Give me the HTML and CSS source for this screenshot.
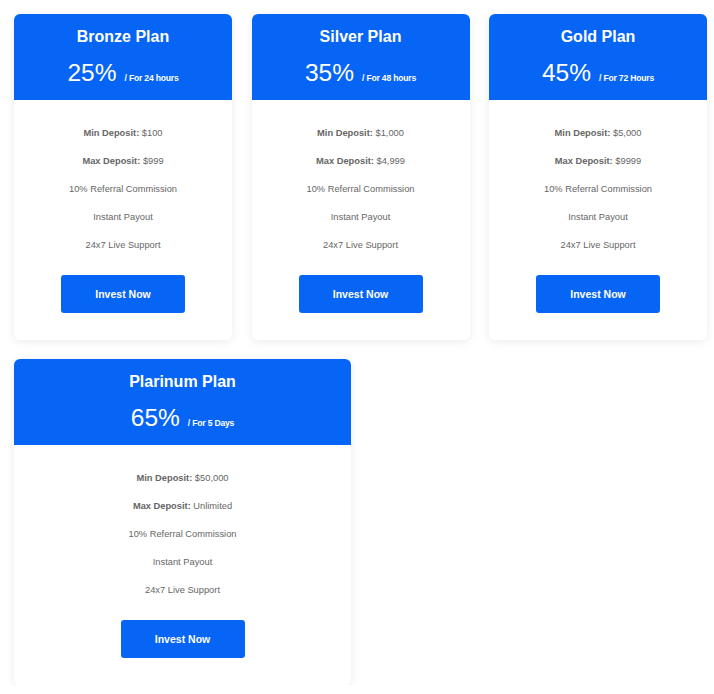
FILE: index.html
```html
<!DOCTYPE html>
<html>
<head>
<meta charset="utf-8">
<link rel="stylesheet" href="styles.css">
</head>
<body>
<div class="plans">
  <div class="card">
    <div class="head">
      <h3 class="title">Bronze Plan</h3>
      <div class="rate"><span class="pct">25%</span><span class="per">/ For 24 hours</span></div>
    </div>
    <div class="body">
      <ul class="list">
        <li><b>Min Deposit:</b> $100</li>
        <li><b>Max Deposit:</b> $999</li>
        <li>10% Referral Commission</li>
        <li>Instant Payout</li>
        <li>24x7 Live Support</li>
      </ul>
      <a class="btn">Invest Now</a>
    </div>
  </div>
  <div class="card">
    <div class="head">
      <h3 class="title">Silver Plan</h3>
      <div class="rate"><span class="pct">35%</span><span class="per">/ For 48 hours</span></div>
    </div>
    <div class="body">
      <ul class="list">
        <li><b>Min Deposit:</b> $1,000</li>
        <li><b>Max Deposit:</b> $4,999</li>
        <li>10% Referral Commission</li>
        <li>Instant Payout</li>
        <li>24x7 Live Support</li>
      </ul>
      <a class="btn">Invest Now</a>
    </div>
  </div>
  <div class="card">
    <div class="head">
      <h3 class="title">Gold Plan</h3>
      <div class="rate"><span class="pct">45%</span><span class="per">/ For 72 Hours</span></div>
    </div>
    <div class="body">
      <ul class="list">
        <li><b>Min Deposit:</b> $5,000</li>
        <li><b>Max Deposit:</b> $9999</li>
        <li>10% Referral Commission</li>
        <li>Instant Payout</li>
        <li>24x7 Live Support</li>
      </ul>
      <a class="btn">Invest Now</a>
    </div>
  </div>
  <div class="card wide">
    <div class="head">
      <h3 class="title">Plarinum Plan</h3>
      <div class="rate"><span class="pct">65%</span><span class="per">/ For 5 Days</span></div>
    </div>
    <div class="body">
      <ul class="list">
        <li><b>Min Deposit:</b> $50,000</li>
        <li><b>Max Deposit:</b> Unlimited</li>
        <li>10% Referral Commission</li>
        <li>Instant Payout</li>
        <li>24x7 Live Support</li>
      </ul>
      <a class="btn">Invest Now</a>
    </div>
  </div>
</div>
</body>
</html>
```

FILE: styles.css
```css
html, body {
  margin: 0;
  padding: 0;
  background: #ffffff;
  font-family: "Liberation Sans", Arial, sans-serif;
}
.plans {
  display: flex;
  flex-wrap: wrap;
  column-gap: 19.5px;
  row-gap: 19px;
  padding: 14px 0 0 14px;
}
.card {
  width: 218px;
  background: #fff;
  border-radius: 6px;
  box-shadow: 0 2px 10px rgba(0, 0, 0, 0.08);
  overflow: hidden;
}
.card.wide {
  width: 337px;
}
.head {
  background: #0765f6;
  color: #fff;
  text-align: center;
  padding: 11px 0 12px;
}
.title {
  margin: 0;
  font-size: 16px;
  line-height: 24px;
  font-weight: bold;
}
.rate {
  display: flex;
  justify-content: center;
  align-items: baseline;
  height: 30px;
  margin-top: 9px;
  line-height: 30px;
}
.pct {
  font-size: 24.5px;
}
.per {
  font-size: 8.6px;
  font-weight: bold;
  margin-left: 8px;
  letter-spacing: -0.2px;
}
.body {
  text-align: center;
  padding: 19px 0 27px;
}
.list {
  list-style: none;
  margin: 0;
  padding: 0;
}
.list li {
  font-size: 9.3px;
  line-height: 28px;
  color: #666;
}
.list b {
  color: #666;
}
.btn {
  display: block;
  width: 124px;
  height: 38px;
  line-height: 38px;
  margin: 16px auto 0;
  background: #0765f6;
  color: #fff;
  font-size: 10.5px;
  font-weight: bold;
  border-radius: 3px;
}
```
